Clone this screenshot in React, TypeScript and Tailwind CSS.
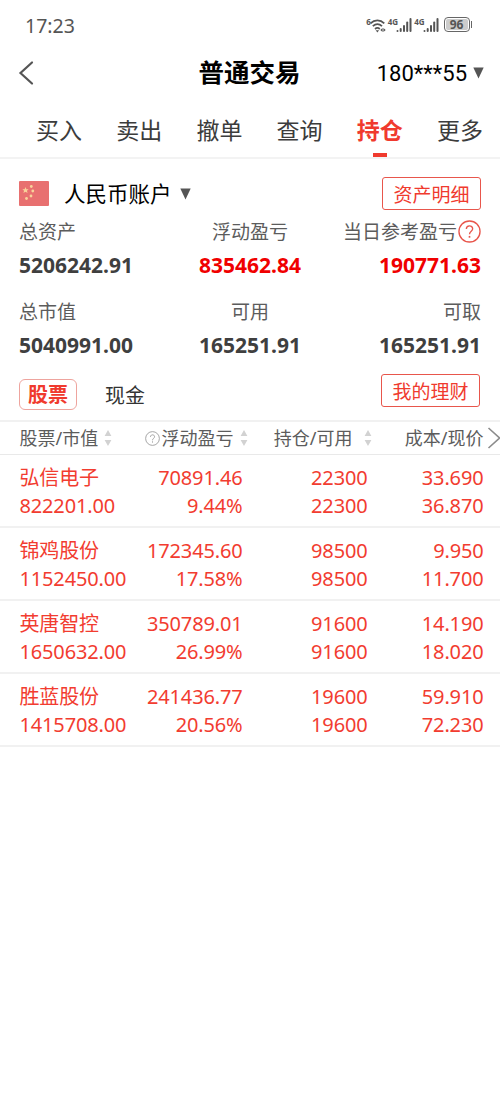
import clsx from 'clsx'

const tabs = ['买入', '卖出', '撤单', '查询', '持仓', '更多']

const summary = [
  { label: '总资产', value: '5206242.91' },
  { label: '浮动盈亏', value: '835462.84', highlight: true },
  { label: '当日参考盈亏', value: '190771.63', highlight: true, help: true },
  { label: '总市值', value: '5040991.00' },
  { label: '可用', value: '165251.91' },
  { label: '可取', value: '165251.91' },
]

const holdings = [
  {
    name: '弘信电子',
    marketValue: '822201.00',
    profit: '70891.46',
    rate: '9.44%',
    amount: '22300',
    available: '22300',
    cost: '33.690',
    price: '36.870',
  },
  {
    name: '锦鸡股份',
    marketValue: '1152450.00',
    profit: '172345.60',
    rate: '17.58%',
    amount: '98500',
    available: '98500',
    cost: '9.950',
    price: '11.700',
  },
  {
    name: '英唐智控',
    marketValue: '1650632.00',
    profit: '350789.01',
    rate: '26.99%',
    amount: '91600',
    available: '91600',
    cost: '14.190',
    price: '18.020',
  },
  {
    name: '胜蓝股份',
    marketValue: '1415708.00',
    profit: '241436.77',
    rate: '20.56%',
    amount: '19600',
    available: '19600',
    cost: '59.910',
    price: '72.230',
  },
]

const columns = 'grid grid-cols-[123px_100px_125px_116px] pl-[19.5px]'

function WifiIcon() {
  return (
    <svg
      width="18"
      height="18"
      viewBox="0 0 18 18"
      fill="none"
      stroke="#555"
      strokeWidth="1.7"
      className="-ml-0.5"
    >
      <path d="M1.5 6.3C5.5 2.4 11.3 2.4 15.3 6.3" />
      <path d="M3.8 9.2c2.8-2.6 6.4-2.6 9.2 0" />
      <path d="M6 12c1.5-1.3 3.3-1.3 4.8 0" />
      <path d="M6.7 13.2h3.4l-1.7 2.3z" fill="#555" stroke="none" />
      <path d="M13.6 11v4l-2.3-2zM14.4 11v4l2.3-2z" fill="#555" stroke="none" />
    </svg>
  )
}

function Signal() {
  return (
    <div className="flex">
      <span className="text-[8px] leading-[9px] font-bold">4G</span>
      <svg width="17" height="17" viewBox="0 0 17 17" fill="#555" className="-ml-0.5">
        <rect x="0.5" y="13" width="2" height="2" rx="1" />
        <rect x="3.7" y="11" width="2" height="4" rx="1" />
        <rect x="7" y="8" width="2" height="7" rx="1" />
        <rect x="10.2" y="4.5" width="2" height="10.5" rx="1" />
        <rect x="13.5" y="1" width="2" height="14" rx="1" />
      </svg>
    </div>
  )
}

function Caret({ className }: { className?: string }) {
  return (
    <svg width="11" height="12" viewBox="0 0 11 12" className={className}>
      <path d="M0.3 0.5h10.4L5.5 11.5z" fill="#555" />
    </svg>
  )
}

function Help({ className }: { className?: string }) {
  return (
    <svg
      viewBox="0 0 24 24"
      fill="none"
      stroke="currentColor"
      strokeWidth="1.4"
      className={className}
    >
      <circle cx="12" cy="12" r="11" />
      <path d="M8.7 9.4c0-4.3 6.6-4.3 6.6-.2 0 2.6-3.3 2.5-3.3 5.7" />
      <path d="M12 16.6v1.9" strokeWidth="1.7" />
    </svg>
  )
}

function Sort({ className }: { className?: string }) {
  return (
    <svg width="8" height="18" viewBox="0 0 8 18" fill="#d2d2d2" className={className}>
      <path d="M4 1l3.4 6H.6zM4 17l3.4-6H.6z" />
    </svg>
  )
}

function Flag() {
  return (
    <svg width="30" height="25" viewBox="0 0 30 25">
      <rect width="30" height="25" rx="1" fill="#e87070" />
      <g fill="#f8d39a">
        <path d="M6.5 6l.9 2.2 2.3.1-1.8 1.4.7 2.3-2.1-1.3-2.1 1.3.7-2.3-1.8-1.4 2.3-.1z" />
        <circle cx="12.3" cy="5.5" r="1.4" />
        <circle cx="13.8" cy="10" r="1.4" />
        <circle cx="12" cy="15" r="1.4" />
        <circle cx="7.5" cy="17.5" r="1.4" />
      </g>
    </svg>
  )
}

function StatusBar() {
  return (
    <div className="flex h-12 items-center justify-between pt-[3px] pr-7 pl-[25px] text-[#555]">
      <span className="text-[19.5px]">17:23</span>
      <div className="flex items-center">
        <div className="flex">
          <span className="text-[8px] leading-[9px] font-bold">6</span>
          <WifiIcon />
        </div>
        <div className="ml-px flex gap-px">
          <Signal />
          <Signal />
        </div>
        <div className="-mt-0.5 ml-1 flex h-[15px] w-[26px] items-center justify-center rounded border-[1.5px] border-[#666] p-px">
          <span className="flex h-full w-full items-center justify-center rounded-xs bg-[#ccc] text-[12px] leading-none font-bold">
            96
          </span>
        </div>
        <span className="-mt-0.5 ml-px h-[7px] w-[1.5px] bg-[#666]" />
      </div>
    </div>
  )
}

function Header() {
  return (
    <header className="grid h-[49px] grid-cols-[150px_1fr_150px] items-center">
      <svg
        width="16"
        height="26"
        viewBox="0 0 16 26"
        fill="none"
        stroke="#555"
        strokeWidth="2.2"
        strokeLinecap="round"
        className="ml-[18px]"
      >
        <path d="M14 2.5L2.5 13 14 23.5" />
      </svg>
      <h1 className="-ml-px text-center text-[25.5px] font-bold text-black">普通交易</h1>
      <div className="flex items-center justify-end pr-4 text-black">
        <span className="pt-px font-[Roboto] text-[22px]">180***55</span>
        <Caret className="ml-1.5" />
      </div>
    </header>
  )
}

function Tabs() {
  return (
    <nav className="flex h-[62px] justify-between border-b-2 border-[#f3f3f3] pr-[17px] pl-9">
      {tabs.map((tab) => {
        const active = tab === '持仓'
        return (
          <div
            key={tab}
            className={clsx(
              'flex flex-col items-center justify-between text-[23px]',
              active ? 'font-bold text-[#f03a2e]' : 'text-[#3c3c3c]',
            )}
          >
            <span className="leading-[66px]">{tab}</span>
            {active && <span className="-mt-[11px] h-1 w-3.5 shrink-0 bg-[#f03a2e]" />}
          </div>
        )
      })}
    </nav>
  )
}

function OutlineButton({ text }: { text: string }) {
  return (
    <button className="h-[33px] w-[99px] rounded-[3px] border border-[#e8564c] pt-[3px] text-[19px] leading-[28px] text-[#f03a2e]">
      {text}
    </button>
  )
}

function Account() {
  return (
    <section className="pt-[18px] pr-[19px] pl-[19px]">
      <div className="flex items-center">
        <Flag />
        <span className="ml-[15px] text-[21.5px] leading-[33px] text-black">人民币账户</span>
        <Caret className="ml-2" />
        <div className="ml-auto">
          <OutlineButton text="资产明细" />
        </div>
      </div>
      <dl className="mt-[5px] grid grid-cols-[150px_1fr_150px] gap-y-[13px]">
        {summary.map((item, i) => (
          <div
            key={item.label}
            className={clsx(
              'flex flex-col leading-[34px]',
              ['items-start', 'items-center', 'items-end'][i % 3],
            )}
          >
            <dt className="flex h-[33px] items-center text-[19px] whitespace-nowrap text-[#5c5c5c]">
              {item.label}
              {item.help && <Help className="mb-px ml-px size-[23px] text-[#e8564c]" />}
            </dt>
            <dd
              className={clsx(
                'text-[21px] font-bold',
                item.highlight ? 'text-[#f00000]' : 'text-[#3f3f3f]',
              )}
            >
              {item.value}
            </dd>
          </div>
        ))}
      </dl>
    </section>
  )
}

function Switcher() {
  return (
    <div className="flex h-[58px] items-start pt-[12px] pr-5 pl-[19px]">
      <span className="mt-[5px] flex h-[31px] w-[58px] items-center justify-center rounded-md border border-[#eea49e] text-[20px] font-bold text-[#f03a2e]">
        股票
      </span>
      <span className="mt-[5px] ml-7 text-[20px] leading-[34px] text-[#333]">现金</span>
      <div className="ml-auto">
        <OutlineButton text="我的理财" />
      </div>
    </div>
  )
}

function Holdings() {
  return (
    <section>
      <div
        className={clsx(
          columns,
          'h-[35px] items-center border-t-2 border-b border-t-[#f1f1f1] border-b-[#e9e9e9] text-[18px] whitespace-nowrap text-[#5c5c5c]',
        )}
      >
        <div className="flex items-center">
          股票/市值
          <Sort className="ml-[6px]" />
        </div>
        <div className="flex items-center justify-end">
          <Help className="mr-0.5 size-[15px] shrink-0 text-[#999]" />
          浮动盈亏
          <Sort className="-mr-[5px] ml-[6px] shrink-0" />
        </div>
        <div className="flex items-center justify-end">
          持仓/可用
          <Sort className="-mr-1 ml-[11px] shrink-0" />
        </div>
        <div className="flex items-center justify-end">
          成本/现价
          <svg
            width="14"
            height="24"
            viewBox="0 0 14 24"
            fill="none"
            stroke="#8c8c8c"
            strokeWidth="1.6"
            className="-mr-[17px] ml-[3px] shrink-0"
          >
            <path d="M1.5 2l11 10-11 10" />
          </svg>
        </div>
      </div>
      {holdings.map((row) => (
        <div
          key={row.name}
          className={clsx(
            columns,
            'h-[73px] border-b-2 border-[#f1f1f1] pt-[9px] text-right text-[20px] leading-7 tracking-[-0.15px] text-[#f23c30]',
          )}
        >
          <div className="text-left">
            <div>{row.name}</div>
            <div>{row.marketValue}</div>
          </div>
          <div>
            <div>{row.profit}</div>
            <div>{row.rate}</div>
          </div>
          <div>
            <div>{row.amount}</div>
            <div>{row.available}</div>
          </div>
          <div>
            <div>{row.cost}</div>
            <div>{row.price}</div>
          </div>
        </div>
      ))}
    </section>
  )
}

export default function App() {
  return (
    <div className="h-[1099px] w-[500px] overflow-hidden bg-white font-['Noto_Sans','Noto_Sans_CJK_SC',sans-serif]">
      <StatusBar />
      <Header />
      <Tabs />
      <Account />
      <Switcher />
      <Holdings />
    </div>
  )
}
